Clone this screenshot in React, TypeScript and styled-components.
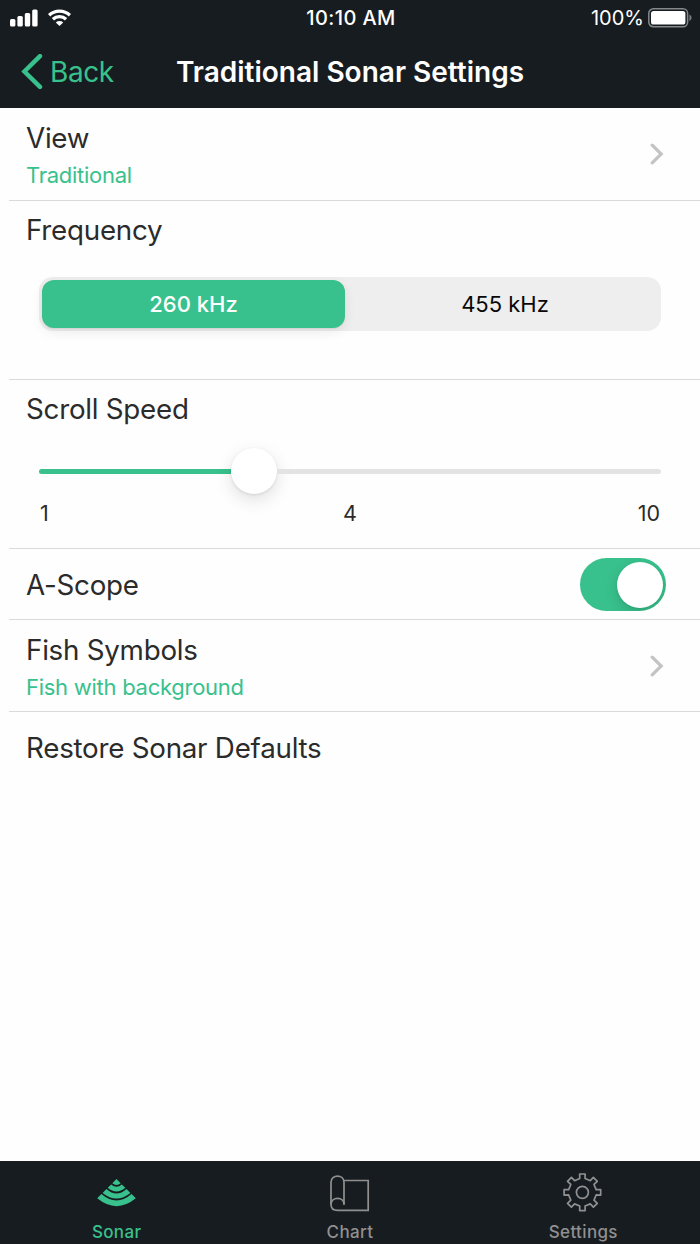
import React, { useState } from 'react';
import styled, { createGlobalStyle } from 'styled-components';

const green = '#38c18c';
const dark = '#171c20';

const GlobalStyle = createGlobalStyle`
  * { box-sizing: border-box; }
  body {
    margin: 0;
    background: #fefefe;
    font-family: Inter, "Liberation Sans", sans-serif;
  }
  button { border: 0; padding: 0; background: none; font: inherit; color: inherit; }
`;

const Screen = styled.div`
  display: flex;
  flex-direction: column;
  width: 700px;
  height: 1244px;
  background: #fefefe;
  color: #2b2b2b;
  white-space: nowrap;
`;

const Header = styled.header`
  height: 108px;
  background: ${dark};
  color: #fff;
`;

const StatusBar = styled.div`
  display: grid;
  grid-template-columns: 1fr auto 1fr;
  align-items: center;
  height: 35px;
  padding: 0 8px 0 10px;
`;

const StatusGroup = styled.div<{ $end?: boolean }>`
  display: flex;
  align-items: center;
  justify-content: ${p => (p.$end ? 'flex-end' : 'flex-start')};
  gap: ${p => (p.$end ? 4 : 10)}px;
  height: 35px;
`;

const StatusText = styled.span<{ $medium?: boolean }>`
  padding-top: 2px;
  font-size: 20px;
  line-height: 33px;
  font-weight: ${p => (p.$medium ? 500 : 400)};
  letter-spacing: ${p => (p.$medium ? 0.4 : 0)}px;
`;

const NavBar = styled.div`
  display: grid;
  grid-template-columns: 1fr auto 1fr;
  align-items: center;
  height: 73px;
  padding: 0 21px;
`;

const BackButton = styled.button`
  display: flex;
  align-items: center;
  gap: 7px;
  color: ${green};
  font-size: 28px;
  line-height: 71px;
  letter-spacing: -0.4px;
  span { padding-top: 2px; }
`;

const Title = styled.h1`
  margin: 0;
  padding-top: 2px;
  font-size: 28px;
  line-height: 71px;
  font-weight: 600;
  letter-spacing: 0;
`;

const List = styled.main`
  flex: 1;
  padding-left: 9px;
`;

const Row = styled.section<{ $height: number; $top?: number; $last?: boolean }>`
  height: ${p => p.$height}px;
  padding: ${p => p.$top ?? 11}px 34px 0 17px;
  border-bottom: ${p => (p.$last ? 0 : 1)}px solid #dadada;
`;

const SplitRow = styled(Row)`
  display: flex;
  justify-content: space-between;
  align-items: center;
  padding-top: ${p => p.$top ?? 1}px;
`;

const Label = styled.div`
  font-size: 27.75px;
  line-height: 36px;
  letter-spacing: -0.25px;
`;

const Value = styled.div`
  margin-top: 5px;
  color: ${green};
  font-size: 22px;
  line-height: 28px;
  letter-spacing: -0.27px;
`;

const Segmented = styled.div`
  display: flex;
  width: 622px;
  height: 54px;
  margin: 29px 0 0 13px;
  padding: 3px;
  border-radius: 14px;
  background: #eeeeee;
`;

const Segment = styled.button<{ $active: boolean }>`
  width: ${p => (p.$active ? 303 : 313)}px;
  padding-left: ${p => (p.$active ? 0 : 7)}px;
  border-radius: 12px;
  background: ${p => (p.$active ? green : 'transparent')};
  box-shadow: ${p => (p.$active ? '0 4px 12px rgba(0,0,0,.08), 0 1px 1px rgba(0,0,0,.05)' : 'none')};
  color: ${p => (p.$active ? '#fff' : '#080808')};
  font-size: 22px;
  font-weight: ${p => (p.$active ? 500 : 400)};
`;

const Slider = styled.div`
  display: flex;
  align-items: center;
  width: 622px;
  height: 46px;
  margin: 21px 0 0 13px;
`;

const Track = styled.div<{ $filled?: boolean }>`
  width: ${p => (p.$filled ? '192.3px' : 'auto')};
  flex: ${p => (p.$filled ? 'none' : 1)};
  height: 5px;
  margin-top: 1px;
  border-radius: ${p => (p.$filled ? '3px 0 0 3px' : '0 3px 3px 0')};
  background: ${p => (p.$filled ? green : '#e3e3e3')};
`;

const SliderKnob = styled.div`
  width: 46px;
  height: 46px;
  border-radius: 50%;
  background: #fff;
  box-shadow: 0 6px 18px rgba(0,0,0,.12), 0 1px 3px rgba(0,0,0,.1);
`;

const Scale = styled.div`
  display: grid;
  grid-template-columns: 1fr auto 1fr;
  width: 622px;
  margin: 5px 0 0 13px;
  padding: 0 1px;
  font-size: 21.5px;
  line-height: 28px;
  span:last-child { text-align: right; }
`;

const Switch = styled.button<{ $on: boolean }>`
  display: flex;
  align-items: center;
  justify-content: ${p => (p.$on ? 'flex-end' : 'flex-start')};
  width: 86px;
  height: 53px;
  padding: 3px;
  border-radius: 27px;
  overflow: hidden;
  background: ${p => (p.$on ? green : '#e3e3e3')};
`;

const SwitchKnob = styled.span`
  width: 46px;
  height: 46px;
  border-radius: 50%;
  background: #fff;
  box-shadow: 0 5px 14px rgba(0,0,0,.13), 0 1px 3px rgba(0,0,0,.08);
`;

const TabBar = styled.nav`
  display: grid;
  grid-template-columns: repeat(3, 1fr);
  height: 83px;
  background: ${dark};
`;

const Tab = styled.button<{ $active?: boolean }>`
  display: flex;
  flex-direction: column;
  align-items: center;
  padding-top: 11px;
  color: ${p => (p.$active ? green : '#909090')};
  font-size: 17px;
  font-weight: 500;
  line-height: 20px;
  letter-spacing: 0.35px;
  svg { margin-bottom: 9.5px; }
`;

const Signal = () => (
  <svg width="28" height="18" fill="#fff">
    <rect x="0" y="10" width="5.4" height="7.6" rx="1.5" />
    <rect x="7.4" y="7" width="5.4" height="10.6" rx="1.5" />
    <rect x="14.8" y="4" width="5.4" height="13.6" rx="1.5" />
    <rect x="22.2" y="0.5" width="5.4" height="17.1" rx="1.5" />
  </svg>
);

const Wifi = () => (
  <svg width="24" height="18" viewBox="0 0 24 18" fill="none" stroke="#fff" strokeWidth="3.3">
    <path d="M1.1 6.2A15.3 15.3 0 0 1 21.9 6.2" />
    <path d="M4.9 10.3A9.6 9.6 0 0 1 18.1 10.3" />
    <path d="M11.5 17L7.8 13.4A5.4 5.4 0 0 1 15.2 13.4Z" fill="#fff" stroke="none" />
  </svg>
);

const Battery = () => (
  <svg width="44" height="20" viewBox="0 0 44 20">
    <rect x="0.8" y="0.8" width="38.8" height="17.9" rx="4.5" fill="none" stroke="#85888a" strokeWidth="1.5" />
    <rect x="3" y="3" width="34.4" height="13.5" rx="2.6" fill="#fff" />
    <path d="M41.4 6.5Q43.6 7.5 43.6 9.8T41.4 13Z" fill="#777a7c" />
  </svg>
);

const BackChevron = () => (
  <svg width="22" height="36" viewBox="0 0 22 36" fill="none" stroke={green} strokeWidth="4.4" strokeLinecap="round">
    <path d="M19 2.1L3.4 17.5L19 32.9" />
  </svg>
);

const Chevron = () => (
  <svg width="17" height="22" viewBox="0 0 17 22" fill="none" stroke="#c3c3c5" strokeWidth="3.2" strokeLinecap="round">
    <path d="M3.2 2.2L12.2 11L3.2 19.8" />
  </svg>
);

const SonarIcon = () => (
  <svg width="40" height="40" viewBox="0.5 0 40 40" fill={green}>
    <path d="M20 7L24.2 11.2Q20 14.8 15.8 11.2Z" />
    <path d="M14.7 12.4Q20 17.1 25.3 12.4L28.8 15.8Q20 23.4 11.2 15.8Z" />
    <path d="M10 17Q20 26 30 17L33.9 20.9Q20 32.3 6.1 20.9Z" />
    <path d="M4.9 22.1Q20 35 35.1 22.1L39.3 26.3Q20 42 0.7 26.3Z" />
  </svg>
);

const ChartIcon = () => (
  <svg width="40" height="40" viewBox="0 0 40 40" fill="none" stroke="#909090" strokeWidth="1.7">
    <path d="M14 32.8V10.3C14 2.1 1 2.1 1 10.3V32.4Q1 38.3 7.6 38.3H38.2V8.5H14" />
    <path d="M1 32.4C1.3 24.2 14 24.5 14 32.5" />
  </svg>
);

const gearTooth = [[-11, 14], [-8.5, 18.5], [8.5, 18.5], [11, 14]];

const GearIcon = () => {
  const points = Array.from({ length: 8 }, (_, i) =>
    gearTooth.map(([a, r]) => {
      const t = ((i * 45 + a) * Math.PI) / 180;
      return `${19.4 + Math.sin(t) * r},${20.3 - Math.cos(t) * r}`;
    }).join(' '),
  ).join(' ');
  return (
    <svg width="40" height="40" viewBox="0 0 40 40" fill="none" stroke="#909090" strokeWidth="1.7" strokeLinejoin="round">
      <polygon points={points} />
      <circle cx="19.4" cy="20.3" r="6" />
    </svg>
  );
};

export default function App() {
  const [frequency, setFrequency] = useState(260);
  const [scope, setScope] = useState(true);
  return (
    <>
      <GlobalStyle />
      <Screen>
        <Header>
          <StatusBar>
            <StatusGroup><Signal /><Wifi /></StatusGroup>
            <StatusText $medium>10:10 AM</StatusText>
            <StatusGroup $end><StatusText>100%</StatusText><Battery /></StatusGroup>
          </StatusBar>
          <NavBar>
            <BackButton><BackChevron /><span>Back</span></BackButton>
            <Title>Traditional Sonar Settings</Title>
          </NavBar>
        </Header>
        <List>
          <SplitRow $height={93} $top={0}>
            <div><Label>View</Label><Value>Traditional</Value></div>
            <Chevron />
          </SplitRow>
          <Row $height={179}>
            <Label>Frequency</Label>
            <Segmented>
              {[260, 455].map(value => (
                <Segment key={value} $active={frequency === value} onClick={() => setFrequency(value)}>
                  {value} kHz
                </Segment>
              ))}
            </Segmented>
          </Row>
          <Row $height={169}>
            <Label>Scroll Speed</Label>
            <Slider><Track $filled /><SliderKnob /><Track /></Slider>
            <Scale><span>1</span><span>4</span><span>10</span></Scale>
          </Row>
          <SplitRow $height={71}>
            <Label>A-Scope</Label>
            <Switch $on={scope} onClick={() => setScope(!scope)}><SwitchKnob /></Switch>
          </SplitRow>
          <SplitRow $height={92}>
            <div><Label>Fish Symbols</Label><Value>Fish with background</Value></div>
            <Chevron />
          </SplitRow>
          <Row $height={72} $top={18} $last>
            <Label>Restore Sonar Defaults</Label>
          </Row>
        </List>
        <TabBar>
          <Tab $active><SonarIcon />Sonar</Tab>
          <Tab><ChartIcon />Chart</Tab>
          <Tab><GearIcon />Settings</Tab>
        </TabBar>
      </Screen>
    </>
  );
}
